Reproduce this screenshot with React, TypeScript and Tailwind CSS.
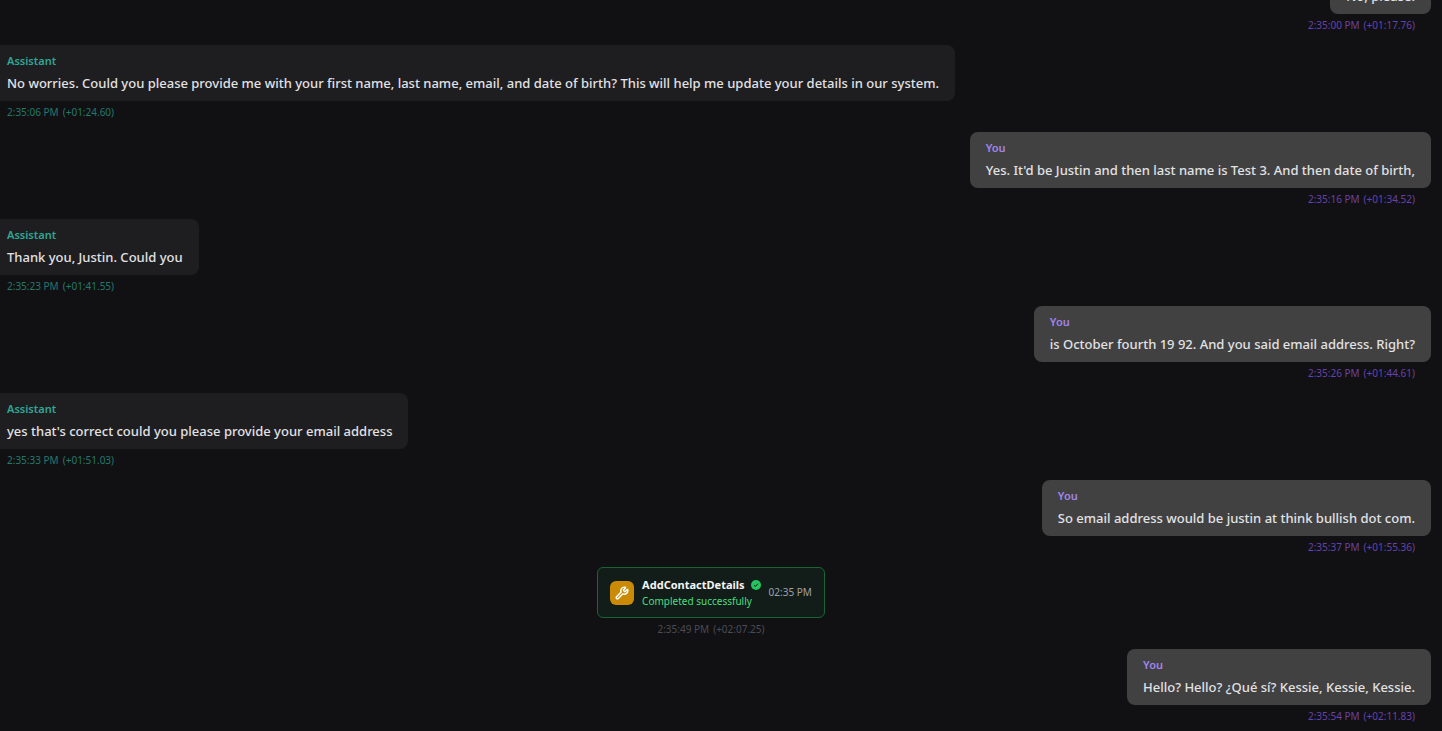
import React from 'react'
import { Wrench } from 'lucide-react'

type Role = 'assistant' | 'user'

interface Message {
    role: Role
    content: string
    time: string
    offset: string
}

interface ToolCall {
    role: 'tool'
    name: string
    status: string
    clock: string
    time: string
    offset: string
}

const entries: (Message | ToolCall)[] = [
    { role: 'user', content: 'No, please.', time: '2:35:00 PM', offset: '(+01:17.76)' },
    {
        role: 'assistant',
        content: 'No worries. Could you please provide me with your first name, last name, email, and date of birth? This will help me update your details in our system.',
        time: '2:35:06 PM',
        offset: '(+01:24.60)',
    },
    { role: 'user', content: "Yes. It'd be Justin and then last name is Test 3. And then date of birth,", time: '2:35:16 PM', offset: '(+01:34.52)' },
    { role: 'assistant', content: 'Thank you, Justin. Could you', time: '2:35:23 PM', offset: '(+01:41.55)' },
    { role: 'user', content: 'is October fourth 19 92. And you said email address. Right?', time: '2:35:26 PM', offset: '(+01:44.61)' },
    { role: 'assistant', content: "yes that's correct could you please provide your email address", time: '2:35:33 PM', offset: '(+01:51.03)' },
    { role: 'user', content: 'So email address would be justin at think bullish dot com.', time: '2:35:37 PM', offset: '(+01:55.36)' },
    { role: 'tool', name: 'AddContactDetails', status: 'Completed successfully', clock: '02:35 PM', time: '2:35:49 PM', offset: '(+02:07.25)' },
    { role: 'user', content: 'Hello? Hello? ¿Qué sí? Kessie, Kessie, Kessie.', time: '2:35:54 PM', offset: '(+02:11.83)' },
]

function Timestamp({ time, offset, className }: { time: string; offset: string; className: string }) {
    return (
        <div className={`flex gap-1 px-4 text-[10px] leading-[15px] ${className}`}>
            <time>{time}</time>
            <span>{offset}</span>
        </div>
    )
}

function MessageBubble({ message }: { message: Message }) {
    const isUser = message.role === 'user'

    return (
        <div className={`flex flex-col gap-1 ${isUser ? 'items-end' : 'items-start'}`}>
            <div className={`rounded-lg px-4 py-2 ${isUser ? 'bg-[#414141]' : 'bg-[#1e1e20]'}`}>
                <div className={`mb-1 text-[11px] leading-4 font-semibold ${isUser ? 'text-[#a284ee]' : 'text-[#2fa795]'}`}>
                    {isUser ? 'You' : 'Assistant'}
                </div>
                <p className="text-[13px] leading-5 font-medium text-[#e2e2e5]">{message.content}</p>
            </div>
            <Timestamp
                time={message.time}
                offset={message.offset}
                className={isUser ? 'text-[#6741ad]' : 'text-[#24786d]'}
            />
        </div>
    )
}

function ToolCard({ call }: { call: ToolCall }) {
    return (
        <div className="flex flex-col items-center gap-1">
            <div className="flex items-center gap-2 rounded-md border border-[#166534] bg-[#121d19] px-3 py-2">
                <div className="flex size-6 items-center justify-center rounded-md bg-[#ca8a04] text-white">
                    <Wrench size={14} strokeWidth={2.5} />
                </div>
                <div>
                    <div className="flex items-center gap-1.5 text-[11px] leading-[18px] font-bold text-[#f4f4f5]">
                        {call.name}
                        {/* Success badge */}
                        <svg viewBox="0 0 10 10" className="size-2.5" aria-hidden="true">
                            <circle cx="5" cy="5" r="5" fill="#22c55e" />
                            <path d="M3 5.2l1.4 1.3L7 3.7" fill="none" stroke="#121d19" strokeWidth="1" />
                        </svg>
                    </div>
                    <div className="text-[10px] leading-[15px] text-[#4ade80]">{call.status}</div>
                </div>
                <time className="text-[10px] leading-[15px] text-[#a1a1aa]">{call.clock}</time>
            </div>
            <Timestamp time={call.time} offset={call.offset} className="text-[#4b4b54]" />
        </div>
    )
}

function App() {
    return (
        // Pinned to the newest message, older ones run off the top
        <main className="flex h-screen flex-col justify-end overflow-hidden bg-[#111113] pb-[7px] font-['Noto_Sans','Open_Sans',sans-serif]">
            <div className="-ml-[9px] mr-[11px] flex flex-col gap-3">
                {entries.map((entry) =>
                    entry.role === 'tool' ? (
                        <ToolCard key={entry.time} call={entry} />
                    ) : (
                        <MessageBubble key={entry.time} message={entry} />
                    )
                )}
            </div>
        </main>
    )
}

export default App
